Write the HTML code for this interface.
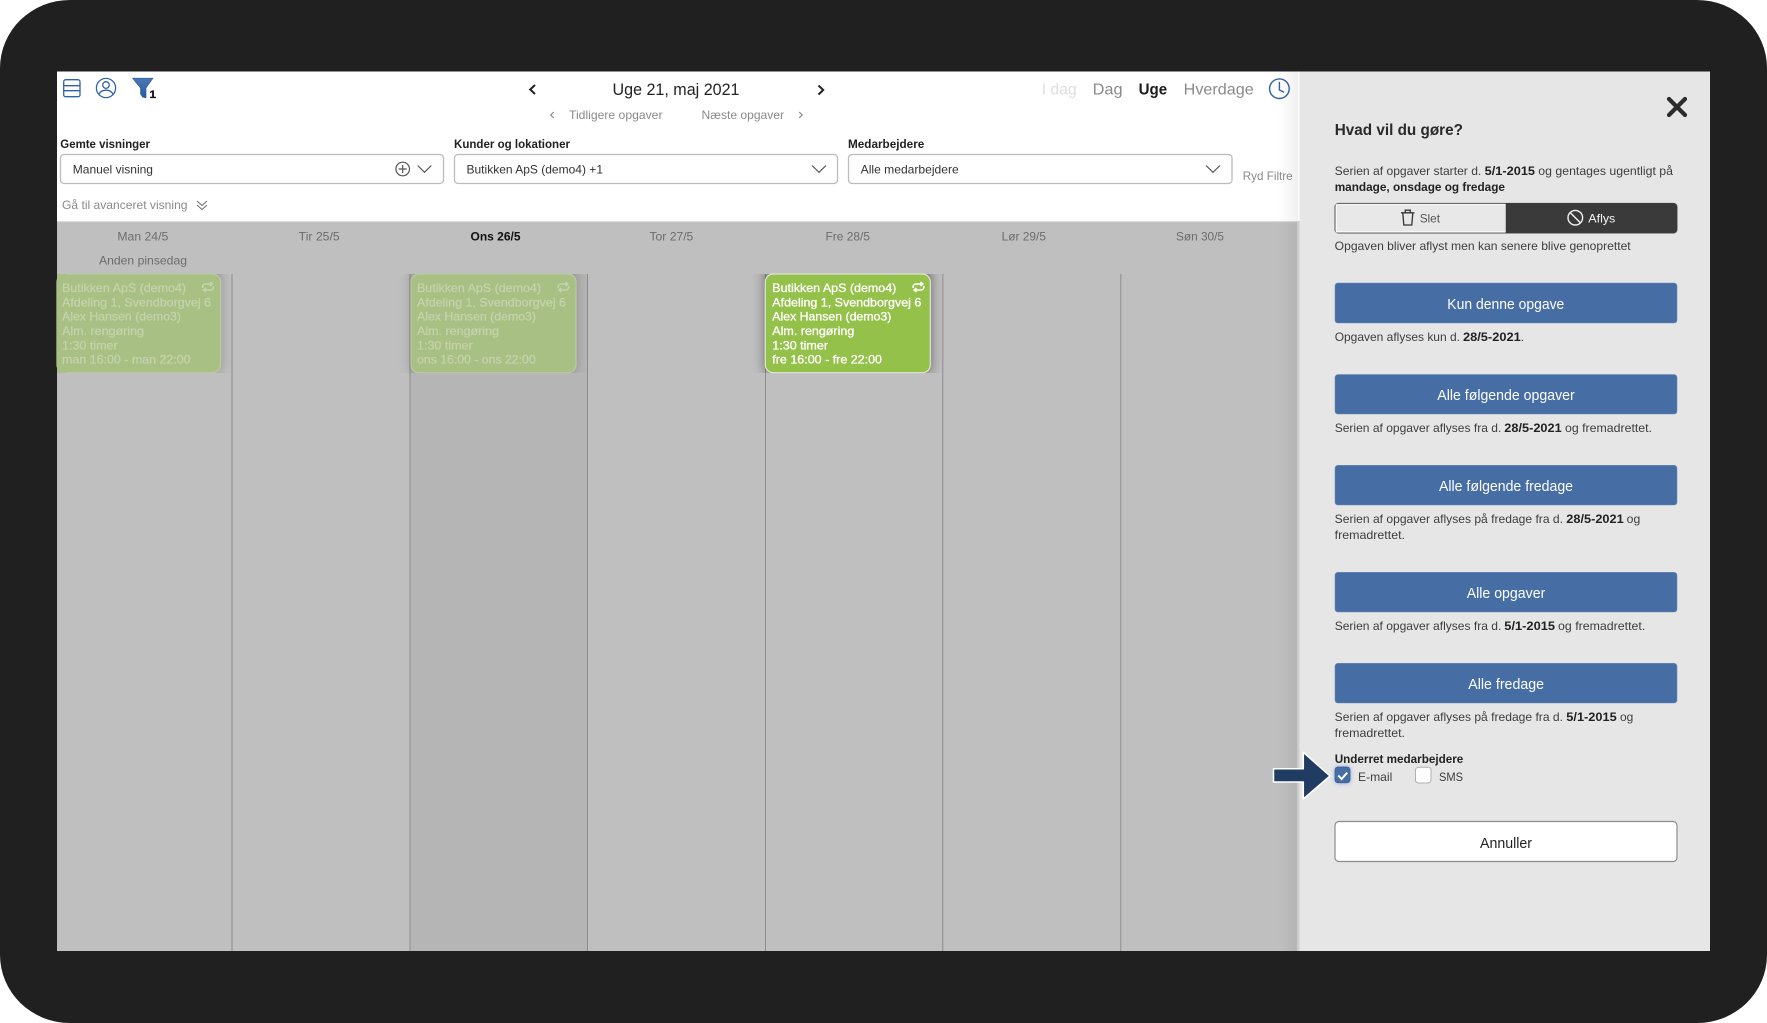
<!DOCTYPE html>
<html lang="da"><head><meta charset="utf-8"><title>Uge 21, maj 2021</title>
<style>
html,body{margin:0;padding:0;background:#fff;width:1767px;height:1023px;overflow:hidden}
svg{display:block}
text{font-family:"Liberation Sans",sans-serif;white-space:pre}
.s{font-size:12px;fill:#3d3d3d}
.b{font-size:12px;fill:#222;font-weight:bold}
.g{font-size:12px;fill:#8a8a8a}
.h{font-size:12px;fill:#6c6c6c;transform:translateY(.5px)}
.v{font-size:16px;fill:#8a8a8a}
.w{font-size:14.5px;fill:#fff}
.e{font-size:12px;fill:#fff;stroke:#fff;stroke-width:.3;transform:translateY(.4px)}
.d{font-size:12px;fill:#c4d3ac;stroke:#c4d3ac;stroke-width:.25;transform:translateY(.4px)}
.btn{fill:#476da5;stroke:#6f8cb6;stroke-width:.6}
</style></head><body>
<svg xmlns="http://www.w3.org/2000/svg" width="1767" height="1023" viewBox="0 0 1767 1023">
<defs>
<filter id="bl" x="-30%" y="-30%" width="160%" height="160%"><feGaussianBlur stdDeviation="6"/></filter>
<filter id="gl" x="-50%" y="-50%" width="200%" height="200%"><feGaussianBlur stdDeviation="2.5"/></filter>
<clipPath id="cp"><rect x="57" y="274" width="1243" height="99"/></clipPath>
<linearGradient id="ps" x1="0" x2="1" y1="0" y2="0"><stop offset="0" stop-color="#000" stop-opacity="0"/><stop offset="1" stop-color="#000" stop-opacity=".06"/></linearGradient>
<linearGradient id="fl" x1="0" x2="0" y1="0" y2="1"><stop offset="0" stop-color="#4d7ab5"/><stop offset="1" stop-color="#245aa0"/></linearGradient>
</defs>
<rect width="1767" height="1023" fill="#fff"/>
<rect width="1767" height="1023" rx="70" ry="68" fill="#212021"/>

<!-- app -->
<rect x="57" y="71.5" width="1243" height="150" fill="#fff"/>
<rect x="57" y="221" width="1243" height="730" fill="#bfbfbf"/>
<rect x="57" y="221" width="1243" height="1.2" fill="#dadada"/>
<rect x="410.5" y="274" width="177" height="677" fill="#b5b5b5"/>
<g fill="#8e8e8e">
<rect x="231.5" y="274" width="1" height="677"/><rect x="409.5" y="274" width="1" height="677"/><rect x="587" y="274" width="1" height="677"/><rect x="765" y="274" width="1" height="677"/><rect x="942.3" y="274" width="1" height="677"/><rect x="1120.3" y="274" width="1" height="677"/>
</g>

<!-- top icons -->
<g fill="none" stroke="#2f62a5" stroke-width="1.3">
<rect x="63.7" y="79.7" width="16.3" height="17" rx="2"/><path d="M64 85.7H80M64 90.7H80"/>
<circle cx="106" cy="88" r="9.6"/><circle cx="106" cy="85" r="3.3"/><path d="M98.7 94.5c1.5-3 4-4.3 7.3-4.3s5.8 1.3 7.3 4.3"/>
</g>
<path d="M132.5 78.2H153L146 88V98L142.5 97 140.5 94V88Z" fill="url(#fl)" stroke="#245aa0" stroke-width=".6" stroke-linejoin="round"/>
<text x="149.5" y="98" font-size="11" font-weight="bold" fill="#111" stroke="#111" stroke-width=".3" textLength="6.5" lengthAdjust="spacingAndGlyphs">1</text>

<!-- nav -->
<path d="M535 85L530.2 89.5 535 94" fill="none" stroke="#222" stroke-width="2"/>
<text x="612.5" y="95" font-size="16.5" fill="#222" textLength="127" lengthAdjust="spacingAndGlyphs">Uge 21, maj 2021</text>
<path d="M818.5 85.5L823.2 90 818.5 94.5" fill="none" stroke="#222" stroke-width="2"/>
<path d="M553.7 112L550.7 115 553.7 118" fill="none" stroke="#888" stroke-width="1.2"/>
<text class="g" x="569" y="119" textLength="93.5" lengthAdjust="spacingAndGlyphs">Tidligere opgaver</text>
<text class="g" x="701.5" y="119" textLength="82.5" lengthAdjust="spacingAndGlyphs">Næste opgaver</text>
<path d="M799.2 112L802.2 115 799.2 118" fill="none" stroke="#888" stroke-width="1.2"/>

<text class="v" x="1041.7" y="94.5" style="fill:#dedede" textLength="35" lengthAdjust="spacingAndGlyphs">I dag</text>
<text class="v" x="1092.6" y="94.5" textLength="30" lengthAdjust="spacingAndGlyphs">Dag</text>
<text class="v" x="1138.6" y="94.5" style="fill:#1c1c1c;font-weight:bold" textLength="28.5" lengthAdjust="spacingAndGlyphs">Uge</text>
<text class="v" x="1183.7" y="94.5" textLength="70" lengthAdjust="spacingAndGlyphs">Hverdage</text>
<g fill="none" stroke="#2f62a5" stroke-width="1.4"><circle cx="1279.4" cy="88.7" r="9.8"/><path d="M1279.4 81.8V90L1284 92.3"/></g>

<!-- filters -->
<text class="b" x="60.3" y="148" textLength="89.7" lengthAdjust="spacingAndGlyphs">Gemte visninger</text>
<text class="b" x="454" y="148" textLength="116" lengthAdjust="spacingAndGlyphs">Kunder og lokationer</text>
<text class="b" x="848" y="148" textLength="76.3" lengthAdjust="spacingAndGlyphs">Medarbejdere</text>
<g fill="#fff" stroke="#bcbcbc" stroke-width="1.3">
<rect x="60.5" y="154.5" width="383" height="29" rx="3.5"/>
<rect x="454.5" y="154.5" width="383" height="29" rx="3.5"/>
<rect x="848.5" y="154.5" width="383.5" height="29" rx="3.5"/>
</g>
<text class="s" style="fill:#333" x="72.8" y="173.5" textLength="80.2" lengthAdjust="spacingAndGlyphs">Manuel visning</text>
<text class="s" style="fill:#333" x="466.5" y="173.5" textLength="136.5" lengthAdjust="spacingAndGlyphs">Butikken ApS (demo4) +1</text>
<text class="s" style="fill:#333" x="860.7" y="173.5" textLength="98" lengthAdjust="spacingAndGlyphs">Alle medarbejdere</text>
<g fill="none" stroke="#555" stroke-width="1.2">
<circle cx="402.7" cy="169" r="6.8"/><path d="M402.7 165V173M398.7 169H406.7"/>
<path d="M417.7 165.5L424.5 172.3 431.3 165.5M812 165.5L819 172.3 826 165.5M1206 165.5L1213 172.3 1220 165.5"/>
</g>
<text class="g" x="1242.7" y="180" textLength="50" lengthAdjust="spacingAndGlyphs">Ryd Filtre</text>
<text class="g" x="62" y="209" textLength="125.5" lengthAdjust="spacingAndGlyphs">Gå til avanceret visning</text>
<path d="M197 201L202 205.5 207 201M197 205L202 209.5 207 205" fill="none" stroke="#777" stroke-width="1.1"/>

<!-- day headers -->
<text class="h" x="117.4" y="240" textLength="50.9" lengthAdjust="spacingAndGlyphs">Man 24/5</text>
<text class="h" x="298.7" y="240" textLength="41" lengthAdjust="spacingAndGlyphs">Tir 25/5</text>
<text class="b" x="470.5" y="240.5" style="fill:#111" textLength="50" lengthAdjust="spacingAndGlyphs">Ons 26/5</text>
<text class="h" x="649.5" y="240" textLength="43.8" lengthAdjust="spacingAndGlyphs">Tor 27/5</text>
<text class="h" x="825.5" y="240" textLength="44.5" lengthAdjust="spacingAndGlyphs">Fre 28/5</text>
<text class="h" x="1001.6" y="240" textLength="44.4" lengthAdjust="spacingAndGlyphs">Lør 29/5</text>
<text class="h" x="1176" y="240" textLength="48" lengthAdjust="spacingAndGlyphs">Søn 30/5</text>
<text class="h" x="99" y="264" textLength="88" lengthAdjust="spacingAndGlyphs">Anden pinsedag</text>

<!-- event shadows -->
<g clip-path="url(#cp)">
<rect x="57" y="268" width="164" height="105" fill="#000" opacity=".22" filter="url(#bl)"/>
<rect x="411" y="268" width="165" height="105" fill="#000" opacity=".22" filter="url(#bl)"/>
<rect x="765" y="268" width="166" height="105" fill="#000" opacity=".45" filter="url(#bl)"/>
</g>

<!-- events -->
<rect x="57" y="274" width="163.5" height="98.7" rx="8" fill="#a9c084" stroke="#bcc9a4" stroke-width="1.2"/>
<rect x="57" y="274" width="10" height="98.7" fill="#a9c084"/>
<rect x="411" y="274" width="165" height="98.7" rx="8" fill="#a9c084" stroke="#bcc9a4" stroke-width="1.2"/>
<rect x="765.3" y="274" width="165" height="98.7" rx="8" fill="#94c14a" stroke="#dfe4d4" stroke-width="1.2"/>

<g class="ev">
<text class="d" x="62" y="291.7" textLength="124" lengthAdjust="spacingAndGlyphs">Butikken ApS (demo4)</text>
<text class="d" x="62" y="306" textLength="149" lengthAdjust="spacingAndGlyphs">Afdeling 1, Svendborgvej 6</text>
<text class="d" x="62" y="320.3" textLength="119" lengthAdjust="spacingAndGlyphs">Alex Hansen (demo3)</text>
<text class="d" x="62" y="334.7" textLength="82" lengthAdjust="spacingAndGlyphs">Alm. rengøring</text>
<text class="d" x="62" y="349" textLength="55.7" lengthAdjust="spacingAndGlyphs">1:30 timer</text>
<text class="d" x="62" y="363.3" textLength="128.6" lengthAdjust="spacingAndGlyphs">man 16:00 - man 22:00</text>

<text class="d" x="417" y="291.7" textLength="124" lengthAdjust="spacingAndGlyphs">Butikken ApS (demo4)</text>
<text class="d" x="417" y="306" textLength="149" lengthAdjust="spacingAndGlyphs">Afdeling 1, Svendborgvej 6</text>
<text class="d" x="417" y="320.3" textLength="119" lengthAdjust="spacingAndGlyphs">Alex Hansen (demo3)</text>
<text class="d" x="417" y="334.7" textLength="82" lengthAdjust="spacingAndGlyphs">Alm. rengøring</text>
<text class="d" x="417" y="349" textLength="55.7" lengthAdjust="spacingAndGlyphs">1:30 timer</text>
<text class="d" x="417" y="363.3" textLength="118.7" lengthAdjust="spacingAndGlyphs">ons 16:00 - ons 22:00</text>

<text class="e" x="772.3" y="291.7" textLength="124" lengthAdjust="spacingAndGlyphs">Butikken ApS (demo4)</text>
<text class="e" x="772.3" y="306" textLength="149" lengthAdjust="spacingAndGlyphs">Afdeling 1, Svendborgvej 6</text>
<text class="e" x="772.3" y="320.3" textLength="119" lengthAdjust="spacingAndGlyphs">Alex Hansen (demo3)</text>
<text class="e" x="772.3" y="334.7" textLength="82" lengthAdjust="spacingAndGlyphs">Alm. rengøring</text>
<text class="e" x="772.3" y="349" textLength="55.7" lengthAdjust="spacingAndGlyphs">1:30 timer</text>
<text class="e" x="772.3" y="363.3" textLength="109.7" lengthAdjust="spacingAndGlyphs">fre 16:00 - fre 22:00</text>
</g>
<g fill="none" stroke-width="1.6">
<path transform="translate(208 287)" stroke="#c4d3ac" d="M-5.3 1V-.3A2.7 2.7 0 0 1-2.6-3H3.8M2-5L4.4-3 2-1M5.3-1V.3A2.7 2.7 0 0 1 2.6 3H-3.8M-2 5L-4.4 3-2 1"/>
<path transform="translate(563.4 287)" stroke="#c4d3ac" d="M-5.3 1V-.3A2.7 2.7 0 0 1-2.6-3H3.8M2-5L4.4-3 2-1M5.3-1V.3A2.7 2.7 0 0 1 2.6 3H-3.8M-2 5L-4.4 3-2 1"/>
<path transform="translate(918.5 287)" stroke="#fff" d="M-5.3 1V-.3A2.7 2.7 0 0 1-2.6-3H3.8M2-5L4.4-3 2-1M5.3-1V.3A2.7 2.7 0 0 1 2.6 3H-3.8M-2 5L-4.4 3-2 1"/>
</g>

<!-- side panel -->
<rect x="1278" y="71.5" width="20" height="879.5" fill="url(#ps)"/>
<rect x="1297" y="221" width="3" height="730" fill="#cdcdcd"/>
<rect x="1299.5" y="71.5" width="410.5" height="879.5" fill="#e6e6e6"/>

<path d="M1669 99L1685 115M1685 99L1669 115" stroke="#2c2c2c" stroke-width="4.2" stroke-linecap="round"/>
<text x="1334.7" y="135" font-size="16" font-weight="bold" fill="#2a2a2a" textLength="128.3" lengthAdjust="spacingAndGlyphs">Hvad vil du gøre?</text>

<text class="s" x="1334.7" y="175" textLength="146.6" lengthAdjust="spacingAndGlyphs">Serien af opgaver starter d.</text>
<text class="b" x="1484.7" y="175" textLength="50.3" lengthAdjust="spacingAndGlyphs">5/1-2015</text>
<text class="s" x="1538.3" y="175" textLength="134.7" lengthAdjust="spacingAndGlyphs">og gentages ugentligt på</text>
<text class="b" x="1334.7" y="191" textLength="170.3" lengthAdjust="spacingAndGlyphs">mandage, onsdage og fredage</text>

<rect x="1335" y="203.5" width="342" height="29.5" rx="3.5" fill="#e8e8e8" stroke="#6a6a6a" stroke-width="1.2"/>
<rect x="1336.3" y="204.7" width="169.5" height="27.2" fill="none" stroke="#fff" stroke-width="1"/>
<path d="M1505.7 203H1673.5A3.5 3.5 0 0 1 1677 206.5V229.5A3.5 3.5 0 0 1 1673.5 233H1505.7Z" fill="#3a3a3a"/>
<g fill="none" stroke="#333" stroke-width="1.3">
<path d="M1402.8 213L1403.8 225H1411.8L1412.8 213M1401 212.8H1414.5M1405.3 212.5V210.2H1410.3V212.5"/>
</g>
<text class="s" x="1419.7" y="222.4" style="fill:#555" textLength="20.3" lengthAdjust="spacingAndGlyphs">Slet</text>
<g fill="none" stroke="#f2f2f2" stroke-width="1.4"><circle cx="1575.3" cy="217.7" r="7.3"/><path d="M1570.2 212.6L1580.4 222.8"/></g>
<text class="s" x="1588.3" y="222.4" style="fill:#f5f5f5" textLength="27" lengthAdjust="spacingAndGlyphs">Aflys</text>
<text class="s" x="1334.7" y="250" textLength="296" lengthAdjust="spacingAndGlyphs">Opgaven bliver aflyst men kan senere blive genoprettet</text>

<rect class="btn" x="1335" y="283" width="342" height="40" rx="3"/>
<text class="w" x="1447.3" y="309" textLength="117" lengthAdjust="spacingAndGlyphs">Kun denne opgave</text>
<text class="s" x="1334.7" y="341" textLength="125.3" lengthAdjust="spacingAndGlyphs">Opgaven aflyses kun d.</text>
<text class="b" x="1463" y="341" textLength="57.7" lengthAdjust="spacingAndGlyphs">28/5-2021</text>
<text class="s" x="1520.7" y="341">.</text>

<rect class="btn" x="1335" y="374.5" width="342" height="39.5" rx="3"/>
<text class="w" x="1437.3" y="400" textLength="137.4" lengthAdjust="spacingAndGlyphs">Alle følgende opgaver</text>
<text class="s" x="1334.7" y="432" textLength="166.6" lengthAdjust="spacingAndGlyphs">Serien af opgaver aflyses fra d.</text>
<text class="b" x="1504.3" y="432" textLength="57.4" lengthAdjust="spacingAndGlyphs">28/5-2021</text>
<text class="s" x="1565" y="432" textLength="87" lengthAdjust="spacingAndGlyphs">og fremadrettet.</text>

<rect class="btn" x="1335" y="465.3" width="342" height="39.7" rx="3"/>
<text class="w" x="1439" y="491" textLength="134" lengthAdjust="spacingAndGlyphs">Alle følgende fredage</text>
<text class="s" x="1334.7" y="523" textLength="228.3" lengthAdjust="spacingAndGlyphs">Serien af opgaver aflyses på fredage fra d.</text>
<text class="b" x="1566.3" y="523" textLength="57.4" lengthAdjust="spacingAndGlyphs">28/5-2021</text>
<text class="s" x="1626.7" y="523" textLength="13.6" lengthAdjust="spacingAndGlyphs">og</text>
<text class="s" x="1334.7" y="539" textLength="70.3" lengthAdjust="spacingAndGlyphs">fremadrettet.</text>

<rect class="btn" x="1335" y="572.3" width="342" height="39.7" rx="3"/>
<text class="w" x="1466.7" y="598" textLength="78.6" lengthAdjust="spacingAndGlyphs">Alle opgaver</text>
<text class="s" x="1334.7" y="630" textLength="166.6" lengthAdjust="spacingAndGlyphs">Serien af opgaver aflyses fra d.</text>
<text class="b" x="1504.3" y="630" textLength="50.7" lengthAdjust="spacingAndGlyphs">5/1-2015</text>
<text class="s" x="1558" y="630" textLength="87.3" lengthAdjust="spacingAndGlyphs">og fremadrettet.</text>

<rect class="btn" x="1335" y="663.3" width="342" height="39.7" rx="3"/>
<text class="w" x="1468.3" y="689" textLength="75.7" lengthAdjust="spacingAndGlyphs">Alle fredage</text>
<text class="s" x="1334.7" y="721" textLength="228.3" lengthAdjust="spacingAndGlyphs">Serien af opgaver aflyses på fredage fra d.</text>
<text class="b" x="1566.3" y="721" textLength="50.4" lengthAdjust="spacingAndGlyphs">5/1-2015</text>
<text class="s" x="1620" y="721" textLength="13.3" lengthAdjust="spacingAndGlyphs">og</text>
<text class="s" x="1334.7" y="737" textLength="70.3" lengthAdjust="spacingAndGlyphs">fremadrettet.</text>

<text class="b" x="1334.7" y="763" textLength="128.6" lengthAdjust="spacingAndGlyphs">Underret medarbejdere</text>
<rect x="1335" y="767" width="15" height="16" rx="3" fill="#7f9fd0" filter="url(#gl)"/>
<rect x="1335" y="767" width="15" height="15.7" rx="3" fill="#476da5" stroke="#3a5f95" stroke-width=".8"/>
<path d="M1338.3 775.5L1341.6 779 1347.2 772.7" fill="none" stroke="#fff" stroke-width="2"/>
<text class="s" x="1358" y="781" textLength="34.3" lengthAdjust="spacingAndGlyphs">E-mail</text>
<rect x="1415.5" y="767.3" width="15.5" height="15.7" rx="3" fill="#fff" stroke="#b0b0b0" stroke-width="1"/>
<text class="s" x="1439" y="781" textLength="24" lengthAdjust="spacingAndGlyphs">SMS</text>

<path d="M1273.5 768.8H1303.3V752.3L1330 776 1303.3 799V782H1273.5Z" fill="#213c63" stroke="#fff" stroke-width="1.5" stroke-linejoin="round"/>

<rect x="1335" y="821.5" width="342" height="40" rx="4" fill="#fff" stroke="#8c8c8c" stroke-width="1.2"/>
<text x="1480" y="848" font-size="14.5" fill="#222" textLength="52" lengthAdjust="spacingAndGlyphs">Annuller</text>
</svg>
</body></html>
